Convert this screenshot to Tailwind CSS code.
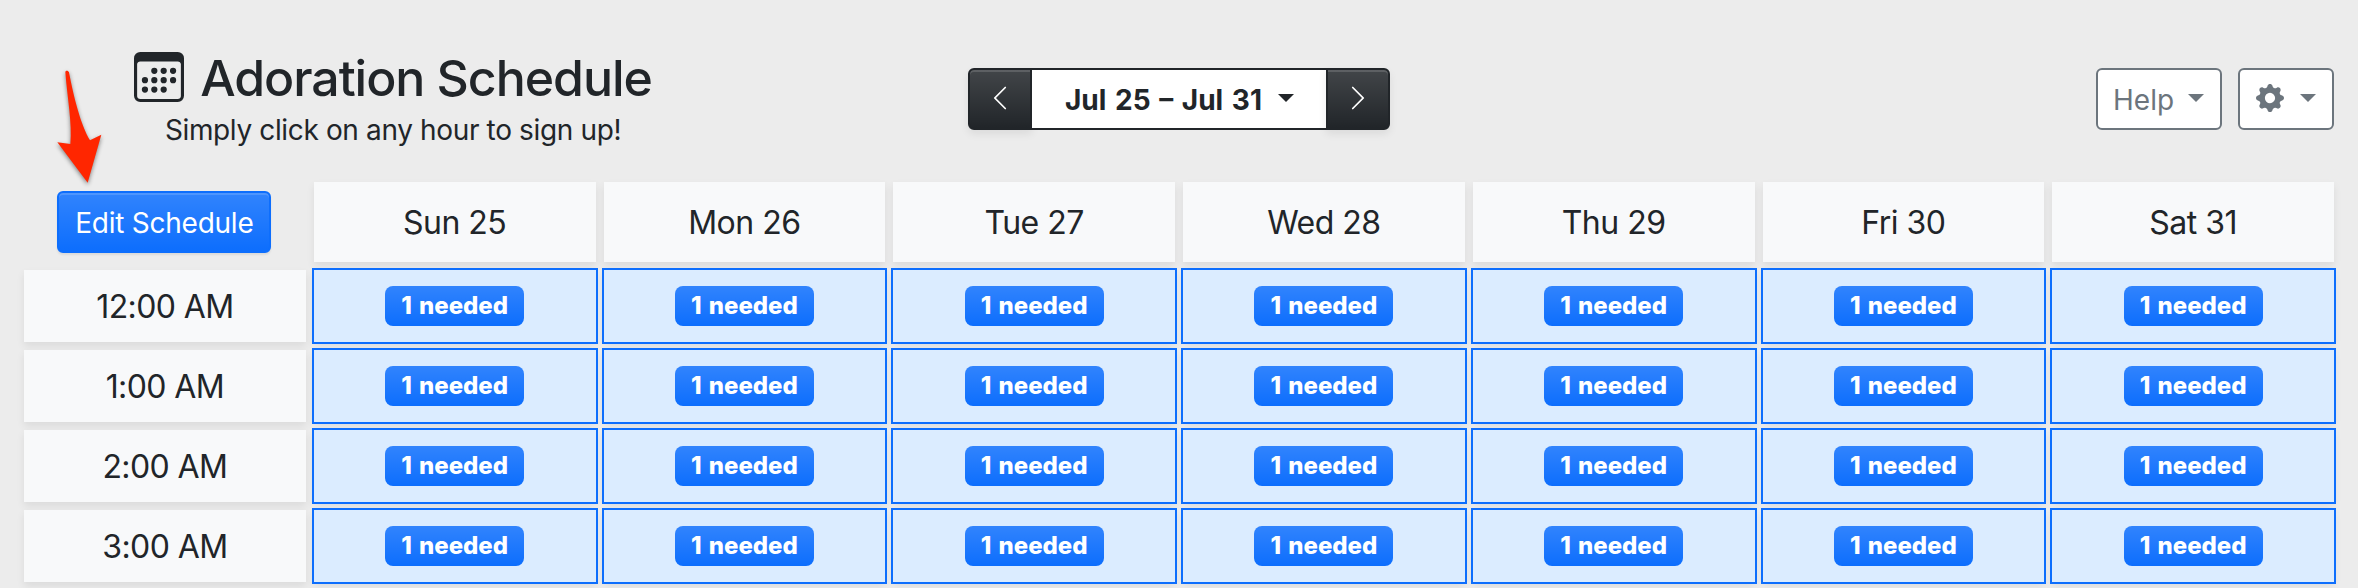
<!DOCTYPE html>
<html lang="en">
<head>
    <meta charset="UTF-8">
    <meta name="viewport" content="width=device-width, initial-scale=1.0">
    <title>Adoration Schedule</title>
    <script src="https://cdn.jsdelivr.net/npm/@tailwindcss/browser@4"></script>
</head>
<body class="bg-[#ececec] text-[#212529] font-['Inter',sans-serif] text-[28px] h-[588px] overflow-hidden">
    <div class="px-6 pt-12">
        <!-- Header -->
        <header class="grid grid-cols-[738px_1fr_738px] h-[134px]">
            <div class="text-center">
                <h1 class="flex items-center justify-center gap-4 text-[50px] leading-[60px] font-medium tracking-[-1.05px]">
                    <svg class="size-[50px] -mt-0.5" viewBox="0 0 16 16" fill="currentColor">
                        <path d="M14 0H2a2 2 0 0 0-2 2v12a2 2 0 0 0 2 2h12a2 2 0 0 0 2-2V2a2 2 0 0 0-2-2zM1 3.857C1 3.384 1.448 3 2 3h12c.552 0 1 .384 1 .857v10.286c0 .473-.448.857-1 .857H2c-.552 0-1-.384-1-.857V3.857z"/>
                        <path d="M6.5 7a1 1 0 1 0 0-2 1 1 0 0 0 0 2zm3 0a1 1 0 1 0 0-2 1 1 0 0 0 0 2zm3 0a1 1 0 1 0 0-2 1 1 0 0 0 0 2zm-9 3a1 1 0 1 0 0-2 1 1 0 0 0 0 2zm3 0a1 1 0 1 0 0-2 1 1 0 0 0 0 2zm3 0a1 1 0 1 0 0-2 1 1 0 0 0 0 2zm3 0a1 1 0 1 0 0-2 1 1 0 0 0 0 2zm-9 3a1 1 0 1 0 0-2 1 1 0 0 0 0 2zm3 0a1 1 0 1 0 0-2 1 1 0 0 0 0 2zm3 0a1 1 0 1 0 0-2 1 1 0 0 0 0 2z"/>
                    </svg>
                    Adoration Schedule
                </h1>
                <p class="mt-px leading-[42px] tracking-[-0.36px]">Simply click on any hour to sign up!</p>
            </div>

            <!-- Week picker -->
            <div class="flex justify-center items-start pt-5">
                <div class="flex h-[62px]">
                    <button class="w-16 flex items-center justify-center pb-0.5 text-white border-2 border-[#212529] rounded-l-[6px] bg-[#212529] bg-[linear-gradient(180deg,rgba(255,255,255,.15),rgba(255,255,255,0))] shadow-[inset_0_2px_0_rgba(255,255,255,.15),0_4px_8px_rgba(0,0,0,.075)]">
                        <svg class="size-7" viewBox="0 0 16 16" fill="currentColor"><path d="M11.354 1.646a.5.5 0 0 1 0 .708L5.707 8l5.647 5.646a.5.5 0 0 1-.708.708l-6-6a.5.5 0 0 1 0-.708l6-6a.5.5 0 0 1 .708 0z"/></svg>
                    </button>
                    <button class="w-[298px] -mx-0.5 flex items-center justify-between pl-[33px] pr-8 pb-0.5 font-bold bg-white border-2 border-[#212529]">
                        <span class="mt-[3px] whitespace-nowrap [word-spacing:2px]">Jul 25 – Jul 31</span>
                        <span class="border-x-[8.4px] border-x-transparent border-t-[8.4px] border-t-[#212529]"></span>
                    </button>
                    <button class="w-16 flex items-center justify-center pb-0.5 text-white border-2 border-[#212529] rounded-r-[6px] bg-[#212529] bg-[linear-gradient(180deg,rgba(255,255,255,.15),rgba(255,255,255,0))] shadow-[inset_0_2px_0_rgba(255,255,255,.15),0_4px_8px_rgba(0,0,0,.075)]">
                        <svg class="size-7" viewBox="0 0 16 16" fill="currentColor"><path d="M4.646 1.646a.5.5 0 0 1 .708 0l6 6a.5.5 0 0 1 0 .708l-6 6a.5.5 0 0 1-.708-.708L10.293 8 4.646 2.354a.5.5 0 0 1 0-.708z"/></svg>
                    </button>
                </div>
            </div>

            <div class="flex justify-end items-start gap-4 pt-5 text-[#6c757d]">
                <button class="w-[126px] h-[62px] flex items-center justify-between pl-[15px] pr-4 pb-0.5 bg-white border-2 border-[#6c757d] rounded-[6px]">
                    <span class="mt-1">Help</span>
                    <span class="border-x-[8.4px] border-x-transparent border-t-[8.4px] border-t-[#6c757d]"></span>
                </button>
                <button class="w-24 h-[62px] flex items-center justify-between px-4 pb-0.5 bg-white border-2 border-[#6c757d] rounded-[6px]">
                    <svg class="size-7" viewBox="0 0 16 16" fill="currentColor"><path d="M9.405 1.05c-.413-1.4-2.397-1.4-2.81 0l-.1.34a1.464 1.464 0 0 1-2.105.872l-.31-.17c-1.283-.698-2.686.705-1.987 1.987l.169.311c.446.82.023 1.841-.872 2.105l-.34.1c-1.4.413-1.4 2.397 0 2.81l.34.1a1.464 1.464 0 0 1 .872 2.105l-.17.31c-.698 1.283.705 2.686 1.987 1.987l.311-.169a1.464 1.464 0 0 1 2.105.872l.1.34c.413 1.4 2.397 1.4 2.81 0l.1-.34a1.464 1.464 0 0 1 2.105-.872l.31.17c1.283.698 2.686-.705 1.987-1.987l-.169-.311a1.464 1.464 0 0 1 .872-2.105l.34-.1c1.4-.413 1.4-2.397 0-2.81l-.34-.1a1.464 1.464 0 0 1-.872-2.105l.17-.31c.698-1.283-.705-2.686-1.987-1.987l-.311.169a1.464 1.464 0 0 1-2.105-.872l-.1-.34zM8 10.93a2.929 2.929 0 1 1 0-5.86 2.929 2.929 0 0 1 0 5.86z"/></svg>
                    <span class="border-x-[8.4px] border-x-transparent border-t-[8.4px] border-t-[#6c757d]"></span>
                </button>
            </div>
        </header>

        <!-- Schedule -->
        <div id="days" class="grid grid-cols-8 gap-2 h-20 text-[32px]">
            <div class="flex items-center justify-center pr-px">
                <button class="w-[214px] h-[62px] pt-px text-[28px] leading-[42px] tracking-[-0.25px] text-white border-2 border-[#0d6efd] rounded-[6px] bg-[#0d6efd] bg-[linear-gradient(180deg,rgba(255,255,255,.15),rgba(255,255,255,0))] shadow-[inset_0_2px_0_rgba(255,255,255,.15),0_2px_2px_rgba(0,0,0,.075)]">Edit Schedule</button>
            </div>
        </div>
        <div id="hours" class="grid grid-cols-8 gap-2 mt-2 text-[32px]"></div>
    </div>

    <!-- Pointer to the edit button -->
    <svg class="absolute left-10 top-[60px] w-[90px] h-[140px] drop-shadow-[0_2px_2px_rgba(0,0,0,.45)]" viewBox="0 0 270 420" fill="#ff2600">
        <path d="M76 37C75 31 85 30 87 37C101 110 122 195 150 241L184 224L143 368L52 247L91 252C97 190 82 115 76 37Z"/>
    </svg>

    <script>
    const days = ['Sun 25', 'Mon 26', 'Tue 27', 'Wed 28', 'Thu 29', 'Fri 30', 'Sat 31'];
    const hours = ['12:00 AM', '1:00 AM', '2:00 AM', '3:00 AM'];

    document.getElementById('days').innerHTML += days.map(day =>
        `<div class="flex items-center justify-center pt-0.5 bg-[#f8f9fa] tracking-[-0.5px] shadow-[0_4px_8px_rgba(0,0,0,.075)]">${day}</div>`
    ).join('');

    const slot = `
        <div class="flex items-center justify-center bg-[#dbecff] outline-2 outline-[#0d6efd] shadow-[0_4px_8px_rgba(0,0,0,.075)]">
            <span class="w-[139px] h-10 flex items-center justify-center rounded-[8px] text-2xl font-extrabold [word-spacing:2px] text-white bg-[#0d6efd] bg-[linear-gradient(180deg,rgba(255,255,255,.15),rgba(255,255,255,0))]">1 needed</span>
        </div>`;

    document.getElementById('hours').innerHTML = hours.map(hour =>
        `<div class="h-[72px] flex items-center justify-center pt-0.5 bg-[#f8f9fa] tracking-[-0.6px] shadow-[0_4px_8px_rgba(0,0,0,.075)]">${hour}</div>` + slot.repeat(days.length)
    ).join('');
    </script>
</body>
</html>
